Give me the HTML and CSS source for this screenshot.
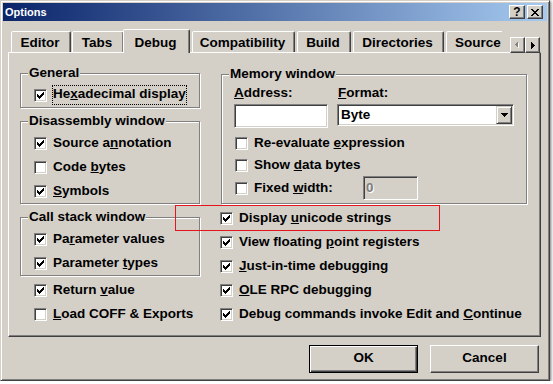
FILE: index.html
```html
<!DOCTYPE html>
<html lang="en">
    <head>
        <meta charset="UTF-8" />
        <title>Options</title>
        <link rel="stylesheet" href="styles.css">
    </head>
    <body>
        <svg width="0" height="0" class="defs">
            <symbol id="tick" viewBox="0 0 7 7">
                <path d="M6 0h1v1h-1z M5 1h2v1h-2z M0 2h1v1h-1z M4 2h3v1h-3z M0 3h2v1h-2z M3 3h3v1h-3z M0 4h5v1h-5z M1 5h3v1h-3z M2 6h1v1h-1z" fill="#000" />
            </symbol>
        </svg>

        <div class="window">
            <div class="titlebar">
                <span class="title">Options</span>
                <span class="capbtn help">?</span>
                <span class="capbtn">
                    <svg width="8" height="7" viewBox="0 0 8 7" shape-rendering="crispEdges">
                        <path d="M0 0h2v1h-2z M6 0h2v1h-2z M1 1h2v1h-2z M5 1h2v1h-2z M2 2h4v1h-4z M3 3h2v1h-2z M2 4h4v1h-4z M1 5h2v1h-2z M5 5h2v1h-2z M0 6h2v1h-2z M6 6h2v1h-2z" fill="#000" />
                    </svg>
                </span>
            </div>

            <div class="body">
                <div class="tabstrip">
                    <div class="tabs">
                        <div class="tab t-editor">Editor</div>
                        <div class="tab t-tabs">Tabs</div>
                        <div class="tab t-debug active">Debug</div>
                        <div class="tab t-compat">Compatibility</div>
                        <div class="tab t-build">Build</div>
                        <div class="tab t-dirs">Directories</div>
                        <div class="tab t-source">Source</div>
                    </div>
                    <div class="scroller">
                        <span class="sbtn">
                            <svg width="5" height="8" viewBox="0 0 5 8" shape-rendering="crispEdges">
                                <path d="M4 1v7L1 4.5z" fill="#fff" />
                                <path d="M3 0v7L0 3.5z" fill="#808080" />
                            </svg>
                        </span>
                        <span class="sbtn">
                            <svg width="4" height="7" viewBox="0 0 4 7" shape-rendering="crispEdges">
                                <path d="M0 0v7l4-3.5z" fill="#000" />
                            </svg>
                        </span>
                    </div>
                </div>

                <div class="panel">
                    <div class="col">
                        <div class="group">
                            <span class="legend">General</span>
                            <label class="check"><span class="box"><svg><use href="#tick" /></svg></span><span class="focus">He<u>x</u>adecimal display</span></label>
                        </div>

                        <div class="group gap">
                            <span class="legend">Disassembly window</span>
                            <label class="check"><span class="box"><svg><use href="#tick" /></svg></span><span>Source a<u>n</u>notation</span></label>
                            <label class="check"><span class="box"></span><span>Code <u>b</u>ytes</span></label>
                            <label class="check"><span class="box"><svg><use href="#tick" /></svg></span><span><u>S</u>ymbols</span></label>
                        </div>

                        <div class="group gap">
                            <span class="legend">Call stack window</span>
                            <label class="check"><span class="box"><svg><use href="#tick" /></svg></span><span>Pa<u>r</u>ameter values</span></label>
                            <label class="check"><span class="box"><svg><use href="#tick" /></svg></span><span>Parameter <u>t</u>ypes</span></label>
                        </div>

                        <div class="loose">
                            <label class="check"><span class="box"><svg><use href="#tick" /></svg></span><span>Return <u>v</u>alue</span></label>
                            <label class="check"><span class="box"></span><span><u>L</u>oad COFF &amp; Exports</span></label>
                        </div>
                    </div>

                    <div class="col">
                        <div class="group memory">
                            <span class="legend">Memory window</span>
                            <div class="fields">
                                <span><u>A</u>ddress:</span>
                                <span class="flabel"><u>F</u>ormat:</span>
                                <span class="field"></span>
                                <span class="field select">
                                    <span>Byte</span>
                                    <span class="drop">
                                        <svg width="7" height="4" viewBox="0 0 7 4" shape-rendering="crispEdges">
                                            <path d="M0 0h7l-3.5 4z" fill="#000" />
                                        </svg>
                                    </span>
                                </span>
                            </div>
                            <label class="check small first"><span class="box"></span><span>Re-evaluate <u>e</u>xpression</span></label>
                            <label class="check small"><span class="box"></span><span>Show <u>d</u>ata bytes</span></label>
                            <label class="check"><span class="box"></span><span class="fixed">Fixed <u>w</u>idth:</span><span class="field disabled">0</span></label>
                        </div>

                        <div class="after">
                            <label class="check"><span class="box"><svg><use href="#tick" /></svg></span><span>Display <u>u</u>nicode strings</span></label>
                            <label class="check"><span class="box"><svg><use href="#tick" /></svg></span><span>View floating <u>p</u>oint registers</span></label>
                            <label class="check"><span class="box"><svg><use href="#tick" /></svg></span><span><u>J</u>ust-in-time debugging</span></label>
                            <label class="check"><span class="box"><svg><use href="#tick" /></svg></span><span><u>O</u>LE RPC debugging</span></label>
                            <label class="check"><span class="box"><svg><use href="#tick" /></svg></span><span>Debug commands invoke Edit and <u>C</u>ontinue</span></label>
                        </div>
                    </div>

                    <div class="mark"></div>
                </div>

                <div class="buttons">
                    <span class="button default">OK</span>
                    <span class="button">Cancel</span>
                </div>
            </div>
        </div>
    </body>
</html>
```

FILE: styles.css
```css
* {
    margin: 0;
    padding: 0;
    box-sizing: border-box;
}

body {
    background: #fff;
    font: bold 13.5px/16px "Liberation Sans", Arial, sans-serif;
    color: #000;
}

.defs {
    position: absolute;
}

u {
    text-underline-offset: 1px;
}

.window {
    width: 550px;
    height: 381px;
    padding: 2px;
    display: flex;
    flex-direction: column;
    background: #d4d0c8;
    border: 1px solid;
    border-color: #d4d0c8 #404040 #404040 #d4d0c8;
    box-shadow: inset 1px 1px #fff, inset -1px -1px #808080, 1px 1px 3px rgba(0, 0, 0, 0.55);
}

/* title bar */

.titlebar {
    height: 18px;
    display: flex;
    align-items: center;
    padding: 0 4px 0 2px;
    background: linear-gradient(to right, #0a246a, #a6caf0);
    color: #fff;
    font-size: 11px;
    line-height: 14px;
}

.capbtn {
    width: 16px;
    height: 14px;
    display: flex;
    align-items: center;
    justify-content: center;
    background: #d4d0c8;
    color: #000;
    border: 1px solid;
    border-color: #fff #404040 #404040 #fff;
    box-shadow: inset -1px -1px #808080;
    font-size: 12px;
}

.help {
    margin-left: auto;
    margin-right: 2px;
}

/* tabs */

.body {
    flex: 1;
    display: flex;
    flex-direction: column;
    padding: 8px 6px 0 5px;
}

.tabstrip {
    height: 24px;
    display: flex;
    position: relative;
    z-index: 1;
}

.tabs {
    width: 494px;
    display: flex;
    align-items: flex-end;
    overflow: hidden;
}

.tab {
    flex: none;
    height: 21px;
    margin-bottom: 1px;
    padding: 3px 2px 0 0;
    text-align: center;
    background: #d4d0c8;
    border: 1px solid;
    border-bottom: 0;
    border-color: #fff #404040 transparent #fff;
    border-radius: 2px 2px 0 0;
    box-shadow: inset -1px 0 #808080;
}

.tab.active {
    height: 24px;
    margin-bottom: 0;
    padding-top: 5px;
    position: relative;
    z-index: 1;
}

.t-editor { margin-left: 3px; width: 60px; }
.t-tabs { margin-left: 1px; width: 52px; }
.t-debug { margin-left: -1px; width: 67px; }
.t-compat { margin-left: 2px; width: 103px; }
.t-build { margin-left: 2px; width: 54px; }
.t-dirs { margin-left: 2px; width: 91px; }

/* last tab runs past the strip and is cut off */
.t-source {
    margin-left: 2px;
    width: 72px;
    padding-left: 8px;
    text-align: left;
}

.scroller {
    align-self: flex-end;
    display: flex;
    margin-left: 8px;
}

.sbtn {
    width: 15px;
    height: 16px;
    display: flex;
    align-items: center;
    justify-content: center;
    background: #d4d0c8;
    border: 1px solid;
    border-color: #fff #404040 #404040 #fff;
    box-shadow: inset -1px -1px #808080;
}

/* tab page */

.panel {
    height: 285px;
    margin-top: -1px;
    padding: 20px 0 0 11px;
    position: relative;
    display: grid;
    grid-template-columns: 180px 307px;
    column-gap: 20px;
    align-items: start;
    border: 1px solid;
    border-color: #fff #404040 #404040 #fff;
    box-shadow: inset -1px -1px #808080;
}

.group {
    position: relative;
    padding: 9px 0 0 13px;
    border: 1px solid #808080;
    box-shadow: inset 1px 1px #fff, 1px 1px #fff;
}

.group.gap {
    margin-top: 13px;
}

.legend {
    position: absolute;
    top: -9px;
    left: 7px;
    padding: 0 1px;
    background: #d4d0c8;
    white-space: nowrap;
}

.check {
    height: 24px;
    display: flex;
    align-items: center;
    white-space: nowrap;
}

.check.small {
    height: 22px;
}

.box {
    flex: none;
    width: 13px;
    height: 13px;
    margin-right: 6px;
    background: #fff;
    border: 1px solid;
    border-color: #808080 #fff #fff #808080;
    box-shadow: inset 1px 1px #404040, inset -1px -1px #d4d0c8;
}

.box svg {
    display: block;
    width: 7px;
    height: 7px;
    margin: 2px 0 0 2px;
    shape-rendering: crispEdges;
}

.focus {
    margin-left: -1px;
    padding-bottom: 2px;
    border: 1px dotted #000;
}

.loose {
    margin-top: 2px;
    padding-left: 14px;
}

.memory {
    margin: 1px 0 0 1px;
    padding: 10px 0 3px 12px;
}

.fields {
    display: grid;
    grid-template-columns: 94px 177px;
    column-gap: 9px;
    row-gap: 3px;
    align-items: start;
}

.flabel {
    padding-left: 1px;
}

.field {
    height: 24px;
    display: flex;
    align-items: center;
    background: #fff;
    border: 1px solid;
    border-color: #808080 #fff #fff #808080;
    box-shadow: inset 1px 1px #404040, inset -1px -1px #d4d0c8;
}

.select {
    height: 22px;
    padding-left: 3px;
}

.drop {
    width: 16px;
    height: 18px;
    margin-left: auto;
    margin-right: 1px;
    display: flex;
    align-items: center;
    justify-content: center;
    background: #d4d0c8;
    border: 1px solid;
    border-color: #d4d0c8 #404040 #404040 #d4d0c8;
    box-shadow: inset 1px 1px #fff, inset -1px -1px #808080;
}

.memory .check {
    padding-left: 1px;
}

.memory .first {
    margin-top: 4px;
}

.fixed {
    width: 109px;
}

.field.disabled {
    width: 55px;
    padding-left: 2px;
    background: #d4d0c8;
    color: #808080;
    text-shadow: 1px 1px #fff;
}

.after {
    margin-top: 2px;
}

.mark {
    position: absolute;
    left: 166px;
    top: 152px;
    width: 265px;
    height: 26px;
    border: 1px solid #e8141b;
}

/* dialog buttons */

.buttons {
    display: flex;
    justify-content: flex-end;
    gap: 12px;
    margin-top: 8px;
    padding-right: 2px;
}

.button {
    width: 109px;
    height: 28px;
    display: flex;
    align-items: center;
    justify-content: center;
    padding-bottom: 2px;
    border: 1px solid;
    border-color: #fff #404040 #404040 #fff;
    box-shadow: inset -1px -1px #808080;
}

.button.default {
    border-color: #000;
    box-shadow: inset 1px 1px #fff, inset -1px -1px #404040, inset -2px -2px #808080;
}
```
